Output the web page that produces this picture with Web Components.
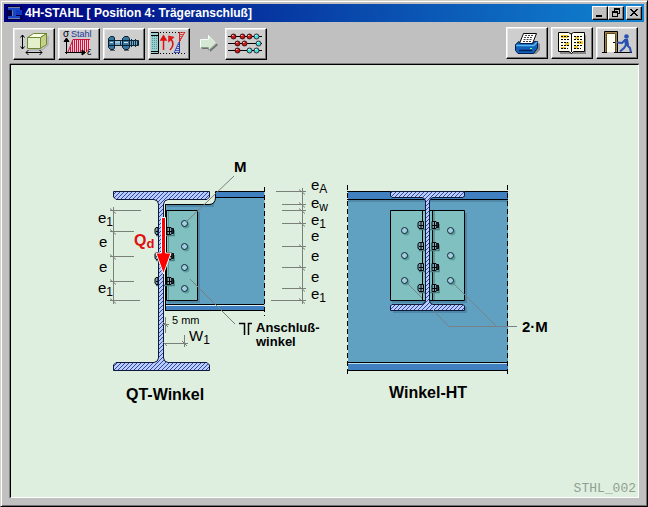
<!DOCTYPE html>
<html lang="de">
<head>
<meta charset="utf-8">
<title>4H-STAHL</title>
<style>
html,body{margin:0;height:100%}
body{font-family:"Liberation Sans",Arial,sans-serif;background:#c0c0c0}
</style>
</head>
<body>
<app-window>
  <title-bar slot="title">4H-STAHL [ Position 4: Trägeranschluß]</title-bar>
  <tool-bar slot="tools">
    <tool-button icon="box" label="Geometrie"></tool-button>
    <tool-button icon="steel" label="Stahl"></tool-button>
    <tool-button icon="bolt" label="Schrauben"></tool-button>
    <tool-button icon="load" label="Schnittgrößen"></tool-button>
    <flow-arrow></flow-arrow>
    <tool-button icon="abacus" label="Berechnen"></tool-button>
    <tool-button slot="end" icon="printer" label="Drucken"></tool-button>
    <tool-button slot="end" icon="book" label="Hilfe"></tool-button>
    <tool-button slot="end" icon="door" label="Beenden"></tool-button>
  </tool-bar>
  <drawing-sheet>STHL_002</drawing-sheet>
</app-window>

<script>
const define = (name, markup) => customElements.define(name, class extends HTMLElement {
  connectedCallback() {
    if (this.shadowRoot) return;
    const t = document.createElement('template');
    t.innerHTML = typeof markup === 'function' ? markup(this) : markup;
    this.attachShadow({mode: 'open'}).append(t.content.cloneNode(true));
  }
});

define('app-window', `
<style>
:host{display:flex;flex-direction:column;box-sizing:border-box;min-height:100vh;background:#c0c0c0;
  border:1px solid #d4d0c8;border-right:1px solid #000;border-bottom:1px solid #000;
  box-shadow:inset 1px 1px #fff,inset -1px -1px #707070;padding:3px}
main{flex:1;display:flex;margin:0 5px 5px 6px}
::slotted(drawing-sheet){flex:1}
</style>
<slot name="title"></slot><slot name="tools"></slot><main><slot></slot></main>`);

define('title-bar', `
<style>
:host{display:flex;align-items:center;height:18px;padding:0 2px 0 3px;color:#fff;font-size:12px;font-weight:bold;
  background:linear-gradient(90deg,#000080,#1084d0)}
h1{flex:1;margin:0 0 0 3px;font:inherit;white-space:nowrap}
svg{display:block}
.app{width:15px;height:14px}
button{width:16px;height:14px;padding:0;border:1px solid;border-color:#fff #000 #000 #fff;background:#c0c0c0;
  box-shadow:inset -1px -1px #808080}
button:last-child{margin-left:2px}
</style>
<svg class="app" viewBox="0 0 15 14" shape-rendering="crispEdges">
  <path d="M0 0H15V14H0Z" fill="#000048"/><path d="M1 2H13V4H9V10H13V12H1V10H5V4H1Z" fill="#1848c8"/>
  <path d="M1 1H13V2H1ZM1 12H13V13H1ZM5 4H6V10H5Z" fill="#7080a0"/><path d="M9 4H15V9H9Z" fill="#1038c0"/>
</svg>
<h1><slot></slot></h1>
<button aria-label="Minimieren"><svg width="14" height="12" shape-rendering="crispEdges"><path d="M3 8H9V10H3Z"/></svg></button>
<button aria-label="Wiederherstellen"><svg width="14" height="12" shape-rendering="crispEdges"><path d="M5 1H11V3H5ZM5 3H6V4H5ZM10 3H11V7H9V6H10ZM3 4H9V6H3ZM3 6H4V10H3ZM8 6H9V10H8ZM3 9H9V10H3Z"/></svg></button>
<button aria-label="Schließen"><svg width="14" height="12" shape-rendering="crispEdges"><path d="M3 2H5V3H6V4H8V3H9V2H11V3H10V4H9V5H8V6H9V7H10V8H11V9H9V8H8V7H6V8H5V9H3V8H4V7H5V6H6V5H5V4H4V3H3Z"/></svg></button>`);

define('tool-bar', `
<style>
:host{display:flex;justify-content:space-between;padding:5px 6px 4px 9px;height:33px}
div{display:flex;gap:3px}
.start{align-items:flex-end}.end{align-items:flex-start}
</style>
<div class="start"><slot></slot></div><div class="end"><slot name="end"></slot></div>`);

define('flow-arrow', `
<style>:host{display:block;width:29px;height:32px}svg{display:block}</style>
<svg width="29" height="32" viewBox="193 28 29 32">
  <path d="M202 41H210V37L218 45L210 52V49H202Z" fill="#707070"/>
  <path d="M200.500 39.500H208.500V35.500L216 43.500L208.500 50.500V47.500H200.500Z" fill="#d4e8d4" stroke="#f4fff4"/>
  <path d="M201 47.500H208.500V50.500L216 43.500" fill="none" stroke="#8c9c8c"/>
</svg>`);

const bead = (x, y, c) => `<circle cx="${x}" cy="${y}" r="2.500" fill="${c}" stroke="#200" stroke-width=".8"/><path d="M${x-1.500} ${y-1}h1.500" stroke="#fff" stroke-width=".8"/>`;
const red = '#c81818', cyan = '#40e0e0';
const icons = {
  box: `<path d="M16 22H29L35 17V8" fill="none" stroke="#a0a0a0"/><g stroke="#6c8830"><path d="M14.500 9.500L20.500 5.500H33.500L27.500 9.500Z" fill="#fcffe8"/>
    <path d="M27.500 9.500L33.500 5.500V16.500L27.500 20.500Z" fill="#c8d088"/><path d="M14.500 9.500H27.500V20.500H14.500Z" fill="#e4f0cc"/></g>
    <path d="M9.500 7V21M7.500 9.500L9.500 7L11.500 9.500M7.500 18.500L9.500 21L11.500 18.500M13 24.500H29M15.500 22L13 24.500L15.500 27M26.500 22L29 24.500L26.500 27" fill="none" stroke="#000"/>`,
  steel: `<path d="M11 24L15 12H32V24Z" fill="#f4ccd4"/><path d="M12.500 19V24M14.500 13V24M16.500 12V24M18.500 12V24M20.500 12V24M22.500 12V24M24.500 12V24M26.500 12V24M28.500 12V24M30.500 12V21" stroke="#d01040"/>
    <path d="M10 24L15 11.500H32" fill="none" stroke="#d01040"/>
    <path d="M8.500 26V11M6 13.500L8.500 10L11 13.500ZM7 24.500H27M24 22L27.500 24.500L24 27Z" stroke="#000"/>
    <text x="5" y="9" font-size="10">σ</text><text x="13" y="9" font-size="9" fill="#203898">Stahl</text><text x="29" y="27" font-size="10">ε</text>`,
  bolt: `<path d="M7 22.500H12M21 22.500H26" stroke="#666"/><g stroke="#0c2030" fill="#3878a0"><path d="M11 12.500H35.500V17.500H11Z" fill="#78a8c8"/>
    <path d="M5.500 10.500L7.500 8.500H10.500L11.500 10V20L10.500 21.500H7.500L5.500 19.500ZM6 12.500H11M6 17.500H11"/>
    <path d="M19.500 10.500L21.500 8.500H25L26.500 10.500V19.500L25 21.500H21.500L19.500 19.500ZM20 12.500H26M20 17.500H26"/></g>
    <path d="M12 14H19M7 14.500H10M21 14.500H25" stroke="#c8e4f4"/><path d="M17.500 12V18M28.500 11V19M30.500 12V18M32.500 11V19M34.500 12V18" stroke="#102c40"/>`,
  load: `<path d="M3 4H10V26H3Z" fill="#98d0d0"/><path d="M4.500 8V22M6.500 8V22M8.500 8V22" stroke="#50989c" stroke-dasharray="1 1"/>
    <path d="M3 4.500H10.500V25.500H3M3 7.500H10M3 23.500H10" fill="none" stroke="#000"/>
    <path d="M12 4.500H37M12 25.500H37" stroke="#000" stroke-dasharray="1 2"/>
    <path d="M15.500 22V11M13 12L15.500 8L18 12Z" fill="#e01010" stroke="#e01010" stroke-width="1.500"/>
    <path d="M22 22Q28 16 22 10M21 13V8.500L25 9.500Z" fill="none" stroke="#e01010" stroke-width="1.500"/>
    <path d="M31.500 4V14" stroke="#d02020"/><path d="M31 4.500H37M31 6.500H36M31 8.500H35M31 10.500H34M31 12.500H33M37 4L31 14" fill="none" stroke="#d82020" stroke-width=".8"/>
    <path d="M31.500 14V25" stroke="#2038a8"/><path d="M26 24.500H31M27 22.500H31M28 20.500H31M29 18.500H31M30 16.500H31M31 14L26 25" fill="none" stroke="#2038a8" stroke-width=".8"/>`,
  abacus: `<path d="M3 8.500H37M3 15.500H37M3 22.500H37" stroke="#000"/>` +
    [[8.5,8.5,red],[17.5,8.5,red],[24.5,8.5,red],[31.5,8.5,cyan],[12.5,15.5,red],[19.5,15.5,red],[33.5,15.5,cyan],[12.5,22.5,red],[24.5,22.5,cyan],[31.5,22.5,cyan]].map(b => bead(...b)).join(''),
  printer: `<path d="M13 27H30L34 23V17L31 15" fill="#888"/><path d="M17.500 6.500H30.500L26.500 16.500H13.500Z" fill="#fff" stroke="#000"/>
    <path d="M19 8.500H28M18 10.500H27M17.500 12.500H26M17 14.500H25" stroke="#444" stroke-dasharray="2 1"/>
    <path d="M9.500 17.500L13 14.500L14 16.500H27L28.500 14.500H31.500V21L27.500 26.500H12L9.500 23.500Z" fill="#1060b8" stroke="#001c50"/>
    <path d="M10 18.500H28L31 15" fill="none" stroke="#58b8f0" stroke-width="1.500"/><path d="M13 23.500H26" stroke="#001c50" stroke-width="1.500"/><path d="M24 21.500H26" stroke="#8f8"/>`,
  book: `<path d="M9 8H35V27H9Z" fill="#888"/><path d="M7.500 5.500H17.500L20 7L22.500 5.500H33.500V24.500H22.500L20.500 26.500L18 24.500H7.500Z" fill="#fffff0" stroke="#000"/>
    <path d="M10 8H17V11H10ZM14 15H18V19H14ZM10 20H15V22H10ZM24 9H28V12H24ZM26 14H32V17H26ZM23 19H27V22H23Z" fill="#f0c830"/>
    <path d="M20.500 7V25" stroke="#000"/><path d="M10 9.500H18M10 12.500H18M10 15.500H17M10 18.500H18M10 21.500H17M23 9.500H31M23 12.500H31M23 15.500H30M23 18.500H31M23 21.500H30" stroke="#000" stroke-dasharray="2 1"/>`,
  door: `<path d="M8.500 25V4.500H21.500V25" fill="#a08050" stroke="#000"/><path d="M11 6H20V25H11Z" fill="#fffff0"/><path d="M10.500 25V6.500H19.500V25" fill="none" stroke="#604820"/>
    <path d="M17 15.500H19" stroke="#000"/><path d="M6 25.500H11M18 25.500H36" stroke="#000"/>
    <circle cx="30.500" cy="9.500" r="2.300" fill="#2850b0"/><path d="M28 12H32L33 18L29 19Z" fill="#2850b0"/>
    <path d="M29 13L26 16L21 15.500M30 18L28 21L24 24.500M31 18L34 21L35 25.500" fill="none" stroke="#2850b0" stroke-width="2"/>`
};

define('tool-button', el => `
<style>
:host{display:block}
button{display:block;width:42px;height:32px;padding:0;background:#cecece;border:1px solid;border-color:#fff #000 #000 #fff;
  box-shadow:inset -1px -1px #707070,inset 1px 1px #e8e8e8}
svg{display:block;margin:-1px}
text{font-family:"Liberation Sans",Arial,sans-serif}
</style>
<button aria-label="${el.getAttribute('label')}"><svg width="42" height="32">${icons[el.getAttribute('icon')]}</svg></button>`);

/* Drawing primitives */
const hole = (x, y) => `<circle cx="${x+1.500}" cy="${y+1.500}" r="3.500" fill="#5c9c9c"/><circle cx="${x}" cy="${y}" r="3" fill="#a0d0e0" stroke="#123"/>`;
const bolt = (x, y, half) => `<g transform="translate(${x} ${y})">
  <path d="M${-half} 4.500H${half+2}V-1" fill="none" stroke="#487c80" stroke-width="1.500"/>
  <path d="M${-half} -3.500H${-half+4.500}V3.500H${-half}L${-half-1} 2V-2ZM${half-5} -3.500H${half-1}L${half} -2V2L${half-1} 3.500H${half-5}ZM${half} -2.500H${half+1.500}V2.500H${half}Z" fill="#78a8b8" stroke="#000"/>
  <path d="M${-half} .500H${-half+4}M${half-5} .500H${half}M${-half+2} -3V3M${half-2.500} -3V3" stroke="#000"/></g>`;
const tick = (x1, x2, y, at) => `<path d="M${x1} ${y}.500H${x2}M${at-3} ${y-2}.500L${at+3} ${y+3}.500"/>`;
const dim = (x, y, s) => `<text x="${x}" y="${y}">e${s ? `<tspan dy="3" font-size="12">${s}</tspan>` : ''}</text>`;

define('drawing-sheet', `
<style>
:host{display:flex;flex-direction:column;background:#dfefdf;border:1px solid;border-color:#000 #fff #fff #000;
  box-shadow:0 -1px #808080,-1px 0 #808080}
figure{flex:1;display:flex;margin:0;min-height:0}
svg{flex:1;display:block;width:100%;min-width:0}
footer{height:16px;line-height:16px;padding-right:2px;text-align:right;color:#90a090;font-family:"Liberation Mono","Courier New",monospace;font-size:13px}
text{font-family:"Liberation Sans",Arial,sans-serif}
.b{font-weight:bold}
</style>
<figure>
<svg viewBox="11 65 627 416" preserveAspectRatio="xMidYMid meet" role="img" aria-label="Trägeranschluß">
<defs>
  <pattern id="hatch" width="4" height="4" patternUnits="userSpaceOnUse"><rect width="4" height="4" fill="#b8ccff"/>
    <path d="M-1 1L1 -1M0 4L4 0M3 5L5 3" stroke="#3048a0" stroke-width="1"/></pattern>
</defs>

<!-- QT-Winkel: beam -->
<path d="M165.500 204.500H209Q215.500 204.500 215.500 197V191.500H264.500V310.500H165.500Z" fill="#60a0c0"/>
<path d="M216 192H264V197H216Z" fill="#4080c0"/><path d="M167 205H210L214 202V207H167Z" fill="#5088a8"/>
<path d="M215.500 197V191.500H264M215.500 197.500H264M166 204.500H209Q215.500 204.500 215.500 197" fill="none" stroke="#000"/>
<path d="M166 304H264V311H166Z" fill="#4080c0"/><path d="M166 305.500H264" stroke="#d8f0f8"/>
<path d="M264 304.500H165.500V310.500H264M165.500 204V311" fill="none" stroke="#000"/>
<path d="M198 212H200V303H168V301H198Z" fill="#5088a8"/>
<path d="M166.500 210.500H197.500V300.500H166.500Z" fill="#80c0c0" stroke="#000"/>
<path d="M168.500 211V300" stroke="#5c9c9c"/>
<path d="M264.500 187V316" stroke="#000" stroke-dasharray="5 3"/>
${[223.5,246.5,267.5,288.5].map(y => hole(184.5, y)).join('')}
${[231,256,281].map(y => bolt(164, y, 8)).join('')}
<!-- QT-Winkel: girder -->
<path d="M113.500 191.500H209.500V197L207 199.500H168Q164 200 163.500 204V358Q164 362 168 362.500H207L209.500 365V370.500H113.500V365L116 362.500H154Q158 362 158.500 358V204Q158 200 154 199.500H116L113.500 197Z" fill="url(#hatch)" stroke="#101838"/>
<path d="M161.500 217.500H165.500V253H171L163.500 274L156 253H161.500Z" fill="#f00" stroke="#fff"/>

<!-- Dimension lines -->
<g stroke="#788078" fill="none">
  <path d="M113.500 207V304M302.500 188V304"/>
  ${tick(110,141,210,113)}${tick(110,134,231,113)}${tick(110,134,256,113)}${tick(110,134,281,113)}${tick(110,140,300,113)}
  ${tick(276,306,191,302)}${[204,210,223,246,267,288].map(y => tick(282,306,y,302)).join('')}${tick(271,306,300,302)}
  <path d="M165.500 317V333M162 324.500H169M163 322L168 327M164 343.500H188M184.500 335V347M182 341L187 346M162 341L167 346"/>
  <path d="M234 176L186 222M190 279L235 324"/>
</g>
<g font-size="15">
  ${dim(98,223,'1')}${dim(99,247)}${dim(99,272)}${dim(98,293,'1')}
  ${dim(311,190,'A')}${dim(311,208,'w')}${dim(311,225,'1')}${dim(311,241)}${dim(311,261)}${dim(311,282)}${dim(311,299,'1')}
  <text x="189" y="341">W<tspan dy="3" font-size="12">1</tspan></text>
</g>
<text x="172" y="324" font-size="11">5 mm</text>
<g class="b">
  <text x="134" y="246" font-size="16" fill="#e01010">Q<tspan dy="2" font-size="13">d</tspan></text>
  <text x="234" y="172" font-size="15">M</text>
  <text x="256" y="332" font-size="13">Anschluß-</text><text x="256" y="346" font-size="13">winkel</text>
  <text x="126" y="400" font-size="16">QT-Winkel</text>
  <text x="389" y="398" font-size="16">Winkel-HT</text>
  <text x="522" y="332" font-size="15">2·M</text>
</g>
<path d="M239 323.500H244.500V335M252 323.500H248.500V335" fill="none" stroke="#000" stroke-width="1.500"/>

<!-- Winkel-HT -->
<path d="M348 191H508V371H348Z" fill="#60a0c0"/>
<path d="M348 192H508V199H348ZM348 363H508V370H348Z" fill="#4080c0"/>
<path d="M348 200H508V202H348Z" fill="#5088a8"/><path d="M348 363.500H508" stroke="#b8dcf0"/>
<path d="M347 191.500H508M347 199.500H508M347 362.500H508M347 370.500H508" stroke="#000"/>
<path d="M347.500 185V375M507.500 185V375" stroke="#000" stroke-dasharray="5 3"/>
<path d="M465 213H467V303H392V301H465ZM393 311H465V307H467V313H393Z" fill="#5088a8"/>
<path d="M390.500 210.500H464.500V300.500H390.500Z" fill="#80c0c0" stroke="#000"/>
<path d="M434 211V300" stroke="#5c9c9c" stroke-width="2"/>
<path d="M422.500 210V300M432.500 210V300" stroke="#000"/>
${[230.5,255.5,280.5].map(y => hole(404.5, y) + hole(450.5, y)).join('')}
${[225,246,267,288].map(y => bolt(428, y, 9)).join('')}
<path d="M390.500 191.500H464.500V196L463 197.500H433Q430 198 429.500 201V301Q430 304 433 304.500H463L464.500 306V310.500H390.500V306L392 304.500H422Q425 304 425.500 301V201Q425 198 422 197.500H392L390.500 196Z" fill="url(#hatch)" stroke="#101838"/>
<path d="M407 283L422 298M433 310L449 326.500H517M453 283L496 326" fill="none" stroke="#788088"/>
</svg>
</figure>
<footer><slot></slot></footer>`);
</script>
</body>
</html>
